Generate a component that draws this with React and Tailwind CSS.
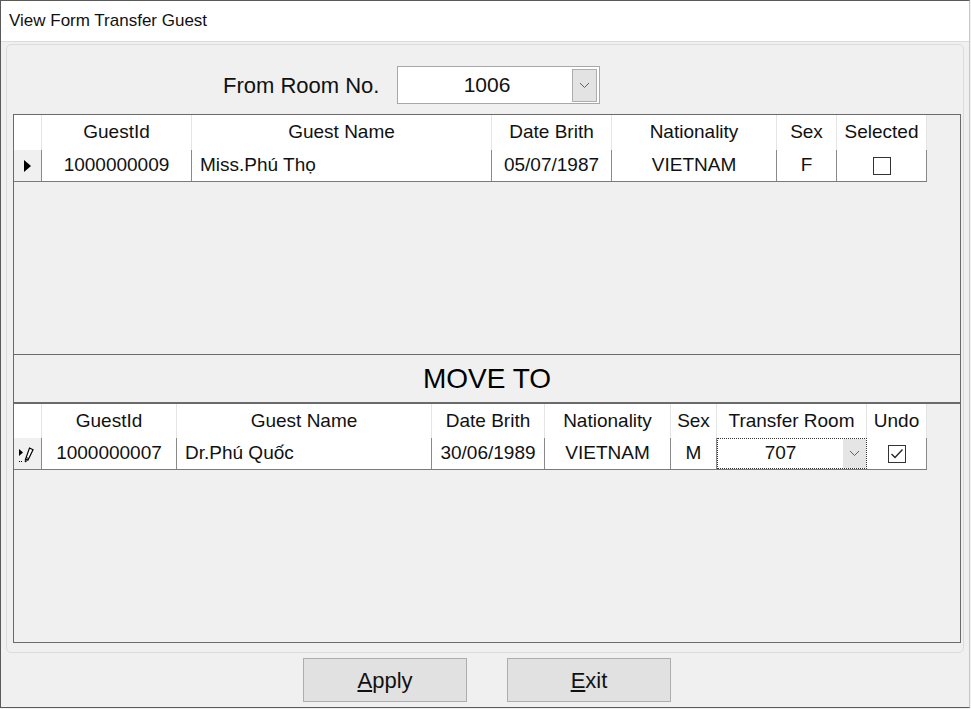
import React from "react"

const font = "font-['Liberation_Sans',Arial,sans-serif]"

const topCols = [
  { label: "GuestId", w: "w-[150px]" },
  { label: "Guest Name", w: "w-[300px]" },
  { label: "Date Brith", w: "w-[120px]" },
  { label: "Nationality", w: "w-[165px]" },
  { label: "Sex", w: "w-[60px]" },
  { label: "Selected", w: "w-[90px]" },
]

const bottomCols = [
  { label: "GuestId", w: "w-[135px]" },
  { label: "Guest Name", w: "w-[255px]" },
  { label: "Date Brith", w: "w-[113px]" },
  { label: "Nationality", w: "w-[126px]" },
  { label: "Sex", w: "w-[46px]" },
  { label: "Transfer Room", w: "w-[150px]" },
  { label: "Undo", w: "w-[60px]" },
]

const Chevron = () => (
  <svg width="11" height="7" viewBox="0 0 11 7" fill="none">
    <path d="M1 1 L5.5 5.5 L10 1" stroke="#606060" strokeWidth="1" />
  </svg>
)

const CheckBox = ({ checked }) => (
  <div className="w-[18px] h-[18px] border border-[#333] bg-white flex items-center justify-center">
    {checked && (
      <svg width="14" height="12" viewBox="0 0 14 12" fill="none">
        <path d="M1.5 6 L5 9.5 L12.5 1.5" stroke="#222" strokeWidth="1.3" />
      </svg>
    )}
  </div>
)

const HeaderRow = ({ cols, h }) => (
  <div className={`flex bg-white ${h} w-[913px] text-[19px] text-[#111]`}>
    <div className="w-[28px] border-r border-[#e4e4e4]" />
    {cols.map((c) => (
      <div key={c.label} className={`${c.w} border-r border-[#e4e4e4] flex items-center justify-center whitespace-nowrap`}>
        {c.label}
      </div>
    ))}
  </div>
)

const Cell = ({ w, children, left }) => (
  <div
    className={`${w} h-full border-r border-[#8a8a8a] bg-white flex items-center ${
      left ? "justify-start pl-[8px]" : "justify-center"
    } whitespace-nowrap`}
  >
    {children}
  </div>
)

export default function App() {
  return (
    <div className={`w-[971px] h-[709px] bg-[#f0f0f0] ${font} text-[#111] flex flex-col`}>
      <div className="w-[970px] h-[708px] border-l border-t border-b border-[#5a5a5a] border-r-[#c8c8c8] border-r flex flex-col">
        {/* title */}
        <div className="h-[41px] bg-white flex items-center pl-[8px] text-[17px] border-b border-[#dcdcdc]">
          View Form Transfer Guest
        </div>

        <div className="flex-1 flex flex-col px-[5px] pt-[2px]">
          <div className="h-[609px] border border-[#dcdcdc] rounded-[5px] bg-[#f0f0f0] pl-[6px] flex flex-col">
            {/* from room */}
            <div className="mt-[21px] h-[38px] flex items-center">
              <div className="ml-[210px] text-[22px] w-[158px] whitespace-nowrap">From Room No.</div>
              <div className="ml-[16px] w-[203px] h-[38px] bg-white border border-[#a8a8a8] flex items-center">
                <div className="flex-1 text-center text-[21px] pl-[4px]">1006</div>
                <div className="w-[25px] h-[33px] mr-[2px] bg-[#e3e3e3] border border-[#adadad] flex items-center justify-center">
                  <Chevron />
                </div>
              </div>
            </div>

            {/* top grid */}
            <div className="mt-[10px] w-[948px] h-[241px] border border-[#6a6a6a] bg-[#f0f0f0] flex flex-col">
              <HeaderRow cols={topCols} h="h-[35px]" />
              <div className="flex h-[32px] w-[913px] border-b border-[#7a7a7a] text-[19px]">
                <div className="w-[28px] h-full border-r border-[#8a8a8a] bg-[#f0f0f0] flex items-center justify-center">
                  <svg width="7" height="12" viewBox="0 0 7 12">
                    <path d="M0 0 L7 6 L0 12 Z" fill="#000" />
                  </svg>
                </div>
                <Cell w="w-[150px]">1000000009</Cell>
                <Cell w="w-[300px]" left>Miss.Phú Thọ</Cell>
                <Cell w="w-[120px]">05/07/1987</Cell>
                <Cell w="w-[165px]">VIETNAM</Cell>
                <Cell w="w-[60px]">F</Cell>
                <Cell w="w-[90px]">
                  <CheckBox />
                </Cell>
              </div>
            </div>

            {/* move to */}
            <div className="w-[948px] h-[48px] border-x border-b border-[#6a6a6a] flex items-center justify-center text-[28px] text-black">
              MOVE TO
            </div>

            {/* bottom grid */}
            <div className="w-[948px] h-[240px] border border-[#6a6a6a] bg-[#f0f0f0] flex flex-col">
              <HeaderRow cols={bottomCols} h="h-[34px]" />
              <div className="flex h-[32px] w-[913px] border-b border-[#7a7a7a] text-[19px]">
                <div className="w-[28px] h-full border-r border-[#8a8a8a] bg-[#f0f0f0] flex items-center justify-center">
                  <svg width="22" height="22" viewBox="0 0 22 22" fill="none">
                    <path d="M2 6 L6 9.5 L2 13 Z" fill="#000" />
                    <path d="M12.5 5 L16 6.8 L11 17 L8.5 16.3 Z" stroke="#000" strokeWidth="1.2" fill="#fff" />
                    <path d="M9 14.5 L11.5 15.5" stroke="#000" strokeWidth="1" />
                    <path d="M8.5 16.3 L8.2 19 L10.5 17.4" stroke="#000" strokeWidth="1" />
                    <rect x="2" y="18" width="1" height="1" fill="#000" />
                    <rect x="4" y="18" width="1" height="1" fill="#000" />
                  </svg>
                </div>
                <Cell w="w-[135px]">1000000007</Cell>
                <Cell w="w-[255px]" left>Dr.Phú Quốc</Cell>
                <Cell w="w-[113px]">30/06/1989</Cell>
                <Cell w="w-[126px]">VIETNAM</Cell>
                <Cell w="w-[46px]">M</Cell>
                <div className="w-[150px] h-full border border-dotted border-[#333] bg-white flex items-center">
                  <div className="flex-1 text-center">707</div>
                  <div className="w-[23px] h-full bg-[#e5e5e5] flex items-center justify-center">
                    <Chevron />
                  </div>
                </div>
                <Cell w="w-[60px]">
                  <CheckBox checked />
                </Cell>
              </div>
            </div>
          </div>

          {/* buttons */}
          <div className="mt-[5px] flex justify-center gap-[40px] pl-[4px]">
            <button className="w-[164px] h-[44px] bg-[#e1e1e1] border border-[#adadad] text-[22px] text-[#111]">
              <span className="underline underline-offset-2">A</span>pply
            </button>
            <button className="w-[164px] h-[44px] bg-[#e1e1e1] border border-[#adadad] text-[22px] text-[#111]">
              <span className="underline underline-offset-2">E</span>xit
            </button>
          </div>
        </div>
      </div>
    </div>
  )
}
